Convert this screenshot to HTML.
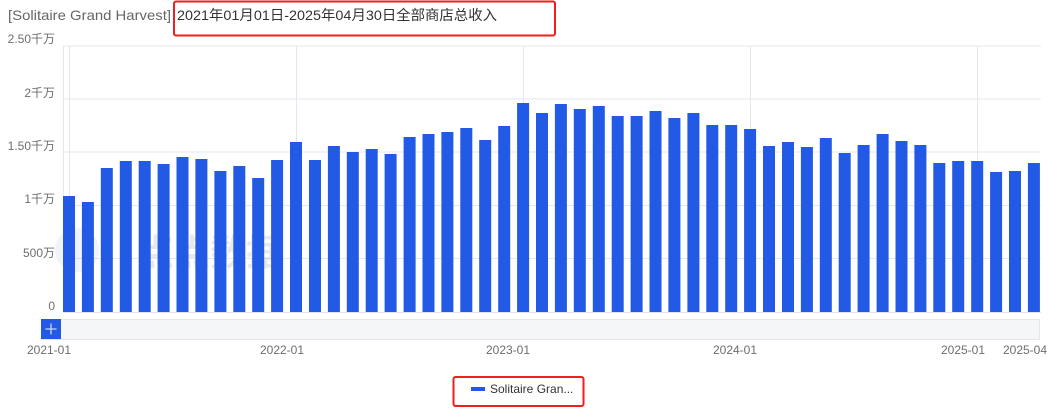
<!DOCTYPE html>
<html><head><meta charset="utf-8"><style>
html,body{margin:0;padding:0;background:#fff;width:1054px;height:409px;overflow:hidden}
svg{display:block;font-family:"Liberation Sans","Noto Sans CJK SC",sans-serif}
</style></head><body>
<svg width="1054" height="409" xmlns="http://www.w3.org/2000/svg">
<text x="8" y="20" font-size="14" fill="#666" textLength="163" lengthAdjust="spacingAndGlyphs">[Solitaire Grand Harvest]</text>
<text x="177" y="20" font-size="14" fill="#333" textLength="320" lengthAdjust="spacingAndGlyphs">2021年01月01日-2025年04月30日全部商店总收入</text>
<rect x="174" y="1.5" width="381" height="34" rx="2" fill="none" stroke="#f01e1e" stroke-width="2"/>
<g stroke="#e6e7ec" stroke-width="1">
<line x1="63" y1="46" x2="1041" y2="46"/>
<line x1="63" y1="99" x2="1041" y2="99"/>
<line x1="63" y1="152" x2="1041" y2="152"/>
<line x1="63" y1="205.5" x2="1041" y2="205.5"/>
<line x1="63" y1="258.5" x2="1041" y2="258.5"/>
<line x1="63.5" y1="46" x2="63.5" y2="312"/>
<line x1="69.5" y1="46" x2="69.5" y2="312"/>
<line x1="296.5" y1="46" x2="296.5" y2="312"/>
<line x1="523.5" y1="46" x2="523.5" y2="312"/>
<line x1="750.5" y1="46" x2="750.5" y2="312"/>
<line x1="977.5" y1="46" x2="977.5" y2="312"/>
</g>
<g font-size="12" fill="#6e6e6e" text-anchor="end">
<text x="55" y="43">2.50千万</text>
<text x="55" y="97">2千万</text>
<text x="55" y="150">1.50千万</text>
<text x="55" y="203">1千万</text>
<text x="55" y="257">500万</text>
<text x="55" y="310">0</text>
</g>
<g opacity="0.1" font-size="36" font-weight="bold" fill="#333">
<circle cx="77" cy="250" r="22" fill="#7a8cd8"/>
<text x="138" y="265">点点数据</text>
</g>
<g fill="#225ae5">
<rect x="63" y="196" width="12" height="116"/><rect x="81.9" y="202" width="12" height="110"/><rect x="100.8" y="168" width="12" height="144"/><rect x="119.8" y="161" width="12" height="151"/><rect x="138.7" y="161" width="12" height="151"/><rect x="157.6" y="164" width="12" height="148"/><rect x="176.5" y="157" width="12" height="155"/><rect x="195.4" y="159" width="12" height="153"/><rect x="214.4" y="171" width="12" height="141"/><rect x="233.3" y="166" width="12" height="146"/><rect x="252.2" y="178" width="12" height="134"/><rect x="271.1" y="160" width="12" height="152"/><rect x="290" y="142" width="12" height="170"/><rect x="309" y="160" width="12" height="152"/><rect x="327.9" y="146" width="12" height="166"/><rect x="346.8" y="152" width="12" height="160"/><rect x="365.7" y="149" width="12" height="163"/><rect x="384.6" y="154" width="12" height="158"/><rect x="403.6" y="137" width="12" height="175"/><rect x="422.5" y="134" width="12" height="178"/><rect x="441.4" y="132" width="12" height="180"/><rect x="460.3" y="128" width="12" height="184"/><rect x="479.2" y="140" width="12" height="172"/><rect x="498.2" y="126" width="12" height="186"/><rect x="517.1" y="103" width="12" height="209"/><rect x="536" y="113" width="12" height="199"/><rect x="554.9" y="104" width="12" height="208"/><rect x="573.8" y="109" width="12" height="203"/><rect x="592.8" y="106" width="12" height="206"/><rect x="611.7" y="116" width="12" height="196"/><rect x="630.6" y="116" width="12" height="196"/><rect x="649.5" y="111" width="12" height="201"/><rect x="668.4" y="118" width="12" height="194"/><rect x="687.4" y="113" width="12" height="199"/><rect x="706.3" y="125" width="12" height="187"/><rect x="725.2" y="125" width="12" height="187"/><rect x="744.1" y="129" width="12" height="183"/><rect x="763" y="146" width="12" height="166"/><rect x="782" y="142" width="12" height="170"/><rect x="800.9" y="147" width="12" height="165"/><rect x="819.8" y="138" width="12" height="174"/><rect x="838.7" y="153" width="12" height="159"/><rect x="857.6" y="145" width="12" height="167"/><rect x="876.6" y="134" width="12" height="178"/><rect x="895.5" y="141" width="12" height="171"/><rect x="914.4" y="145" width="12" height="167"/><rect x="933.3" y="163" width="12" height="149"/><rect x="952.2" y="161" width="12" height="151"/><rect x="971.2" y="161" width="12" height="151"/><rect x="990.1" y="172" width="12" height="140"/><rect x="1009" y="171" width="12" height="141"/><rect x="1027.9" y="163" width="12" height="149"/>
</g>
<line x1="63" y1="312.5" x2="1041" y2="312.5" stroke="#e0e3ea"/>
<rect x="41.5" y="319.5" width="998" height="20" fill="#f5f6f8" stroke="#e4e6ea"/>
<rect x="41" y="319" width="20" height="20" fill="#225ae5"/>
<path d="M51 323.5v11M45.5 329h11" stroke="#c8d4f6" stroke-width="1.3"/>
<g font-size="12" fill="#6e6e6e" text-anchor="middle">
<text x="49" y="354">2021-01</text>
<text x="282" y="354">2022-01</text>
<text x="508" y="354">2023-01</text>
<text x="735" y="354">2024-01</text>
<text x="963" y="354">2025-01</text>
<text x="1025" y="354">2025-04</text>
</g>
<rect x="453.5" y="377" width="130" height="29" rx="2" fill="none" stroke="#f01e1e" stroke-width="2"/>
<rect x="471" y="387" width="14" height="4" fill="#225ae5"/>
<text x="490" y="393" font-size="12" fill="#333">Solitaire Gran...</text>
</svg>
</body></html>
